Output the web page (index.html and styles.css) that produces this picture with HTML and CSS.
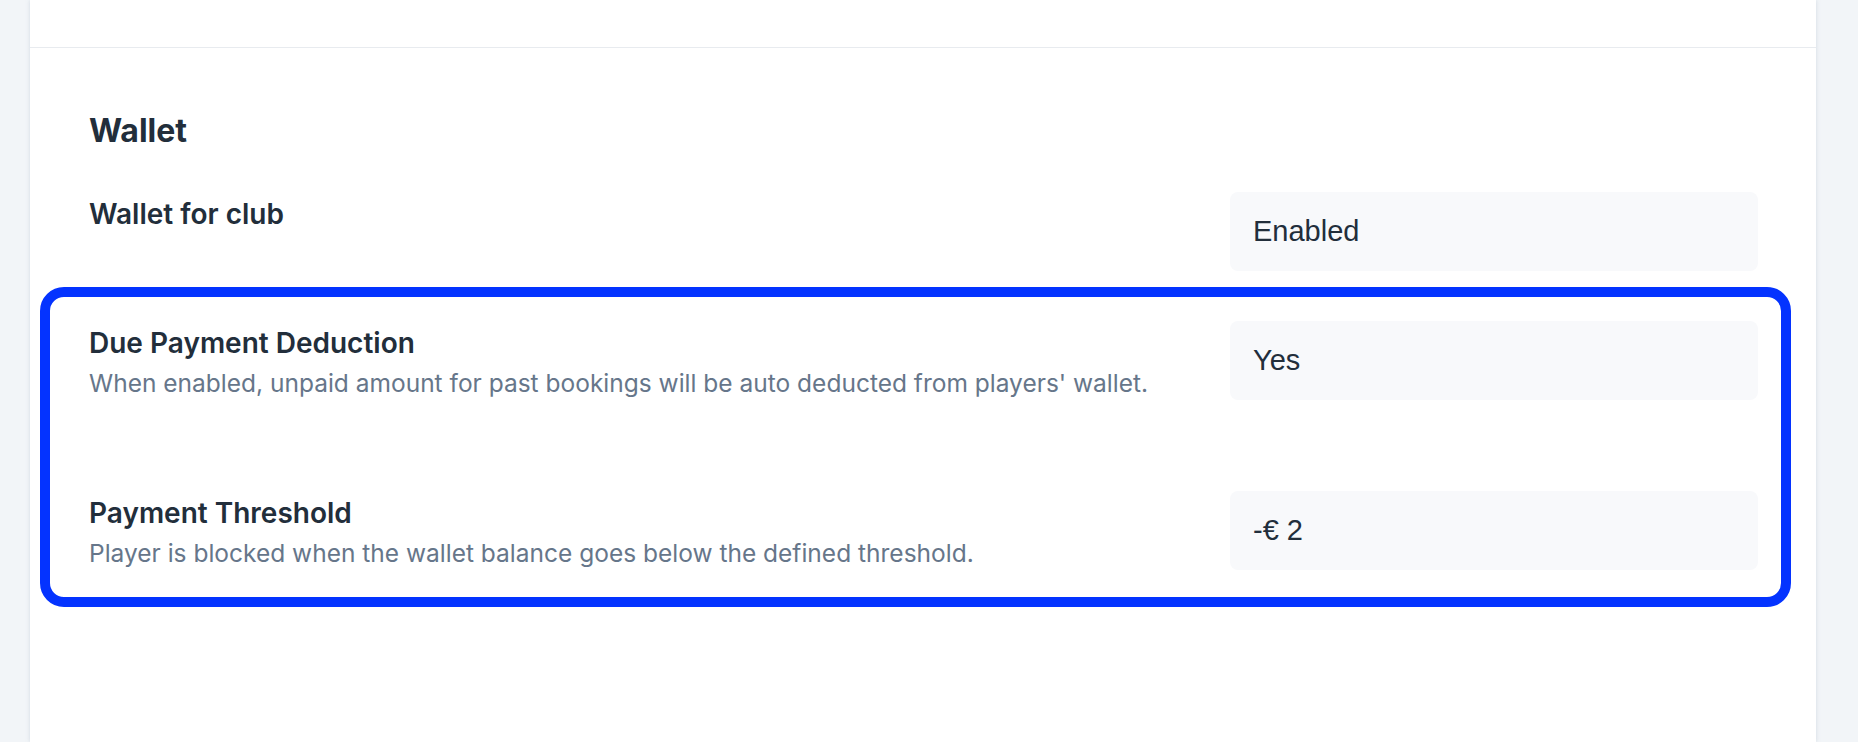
FILE: index.html
```html
<!DOCTYPE html>
<html lang="en">
<head>
<meta charset="utf-8">
<title>Wallet settings</title>
<link rel="stylesheet" href="styles.css">
</head>
<body>
<div class="page">
  <main class="card">
    <div class="card-top"></div>
    <section class="section">
      <h2 class="section-title">Wallet</h2>
      <div class="row row-first">
        <div class="row-text">
          <div class="row-label">Wallet for club</div>
        </div>
        <div class="field">Enabled</div>
      </div>
      <div class="highlight">
        <div class="row">
          <div class="row-text">
            <div class="row-label">Due Payment Deduction</div>
            <div class="row-desc">When enabled, unpaid amount for past bookings will be auto deducted from players' wallet.</div>
          </div>
          <div class="field">Yes</div>
        </div>
        <div class="row row-spaced">
          <div class="row-text">
            <div class="row-label">Payment Threshold</div>
            <div class="row-desc">Player is blocked when the wallet balance goes below the defined threshold.</div>
          </div>
          <div class="field">-€ 2</div>
        </div>
      </div>
    </section>
  </main>
</div>
</body>
</html>
```

FILE: styles.css
```css
* { box-sizing: border-box; }

html, body {
  margin: 0;
  padding: 0;
  height: 100%;
}

body {
  background: #f2f5f8;
  font-family: Inter, "Noto Sans", sans-serif;
  color: #222e3b;
  overflow: hidden;
}

.page {
  height: 742px;
  padding: 0 42px 0 30px;
}

.card {
  height: 100%;
  background: #ffffff;
  box-shadow: 0 0 4px rgba(150, 165, 185, 0.35);
}

.card-top {
  height: 48px;
  border-bottom: 1px solid #e8ebef;
}

.section {
  padding: 0 58px 0 59px;
}

.section-title {
  margin: 67px 0 0;
  font-size: 32px;
  line-height: 32px;
  font-weight: 700;
  color: #222e3b;
}

.row {
  display: flex;
  justify-content: space-between;
  align-items: flex-start;
}

.row-first {
  margin-top: 45px;
  margin-bottom: 16px;
}

.row-spaced {
  margin-top: 91px;
}

.row-text {
  padding-top: 5px;
}

.row-label {
  font-size: 28px;
  line-height: 34px;
  font-weight: 600;
  color: #222e3b;
}

.row-desc {
  margin-top: 8px;
  font-size: 24.5px;
  line-height: 31px;
  font-weight: 400;
  color: #66768a;
}

.field {
  flex: 0 0 528px;
  height: 79px;
  display: flex;
  align-items: center;
  padding-left: 23px;
  background: #f8f9fb;
  border-radius: 8px;
  font-family: "Liberation Sans", Arial, sans-serif;
  font-size: 29px;
  color: #222e3b;
}

.highlight {
  margin: 0 -33px 0 -49px;
  padding: 24px 23px 27px 39px;
  border: 10px solid #0433ff;
  border-radius: 24px;
}
```
